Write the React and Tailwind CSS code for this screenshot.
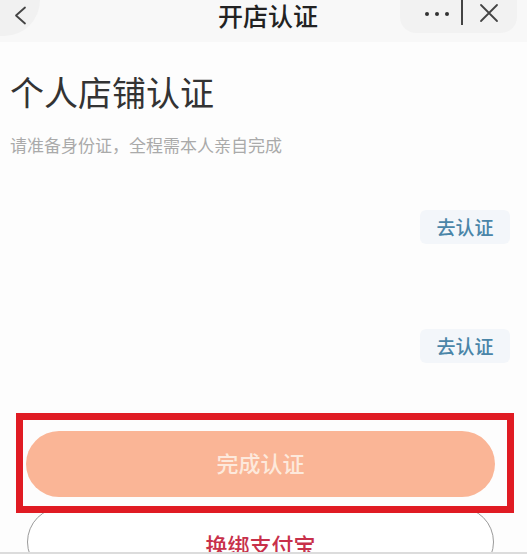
export default function App() {
  const font = { fontFamily: '"Noto Sans CJK SC", "Noto Sans", sans-serif' };
  return (
    <div className="relative w-[527px] h-[554px] overflow-hidden bg-[#fdfdfd]" style={font}>
      {/* header */}
      <div className="flex h-[42px] items-start bg-[#f8f8f8]">
        <div className="w-[127px] shrink-0">
          <div className="w-[40px] h-[36px] rounded-br-full rounded-bl-[10px] bg-[#f1f1f1] flex items-start justify-start pt-[6px] pl-[13px]">
            <svg width="14" height="19" viewBox="0 0 14 19">
              <path d="M12 1.5 L3 9.5 L12 17.5" fill="none" stroke="#444" strokeWidth="1.8" strokeLinecap="round" strokeLinejoin="round" />
            </svg>
          </div>
        </div>
        <div className="flex-1 text-center text-[25px] leading-[30px] font-medium text-[#222] pl-[9px]">开店认证</div>
        <div className="w-[127px] shrink-0 flex">
          <div className="w-[117px] h-[33px] rounded-b-[16px] bg-[#f2f2f2] flex items-start">
            <div className="flex gap-[6px] ml-[25px] mt-[12px]">
              <span className="w-[4px] h-[4px] rounded-full bg-[#333]" />
              <span className="w-[4px] h-[4px] rounded-full bg-[#333]" />
              <span className="w-[4px] h-[4px] rounded-full bg-[#333]" />
            </div>
            <div className="w-[2px] h-[25px] bg-[#444] ml-[12px]" />
            <svg width="20" height="20" viewBox="0 0 20 20" className="ml-[16px] mt-[3px]">
              <path d="M2 2 L18 18 M18 2 L2 18" stroke="#444" strokeWidth="1.8" strokeLinecap="round" />
            </svg>
          </div>
        </div>
      </div>

      {/* title */}
      <div className="px-[10px]">
        <div className="mt-[30px] text-[34px] leading-[40px] text-[#333]">个人店铺认证</div>
        <div className="mt-[21px] text-[17px] leading-[24px] text-[#aaaaaa]">请准备身份证，全程需本人亲自完成</div>
      </div>

      <div className="flex justify-end pr-[17px] mt-[53px]">
        <div className="w-[90px] h-[34px] rounded-[6px] bg-[#f3f6fa] flex items-center justify-center text-[19px] font-medium text-[#4a85a8]">去认证</div>
      </div>
      <div className="flex justify-end pr-[17px] mt-[85px]">
        <div className="w-[90px] h-[34px] rounded-[6px] bg-[#f3f6fa] flex items-center justify-center text-[19px] font-medium text-[#4a85a8]">去认证</div>
      </div>

      {/* red highlighted button */}
      <div className="relative z-10 ml-[16px] w-[498px] h-[100px] mt-[50px] border-[7px] border-[#e01b23] pl-[3px] pr-[12px] pt-[11px]">
        <div className="h-[66px] rounded-full bg-[#fab596] flex items-center justify-center pb-[4px] text-[22px] font-medium text-[#fde9dc]">完成认证</div>
      </div>

      <div className="ml-[27px] w-[467px] h-[70px] -mt-[6px] rounded-[36px] border-[1.5px] border-[#9a9a9a] bg-white flex justify-center pt-[21px] text-[22px] leading-[30px] font-medium text-[#c8304a]">换绑支付宝</div>

      <div className="absolute left-0 right-0 bottom-0 h-[2px] bg-[#dcdcdc]" />
    </div>
  );
}
